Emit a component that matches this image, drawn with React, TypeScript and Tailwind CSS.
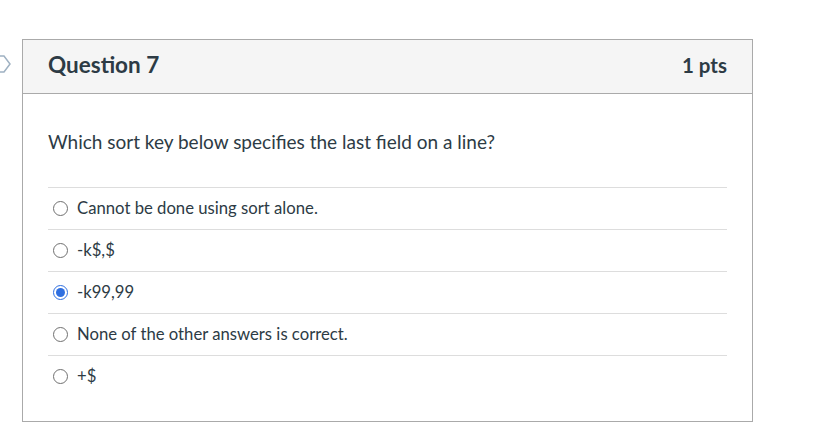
import React from "react"

const answers = [
  { id: "a1", label: "Cannot be done using sort alone.", checked: false },
  { id: "a2", label: "-k$,$", checked: false },
  { id: "a3", label: "-k99,99", checked: true },
  { id: "a4", label: "None of the other answers is correct.", checked: false },
  { id: "a5", label: "+$", checked: false },
]

function Radio({ checked }: { checked: boolean }) {
  if (checked) {
    return (
      <span className="flex h-[15px] w-[15px] items-center justify-center rounded-full border border-[#2f6fe0] bg-white">
        <span className="h-[9px] w-[9px] rounded-full bg-[#2f6fe0]" />
      </span>
    )
  }
  return <span className="block h-[15px] w-[15px] rounded-full border border-[#707070] bg-white" />
}

export default function App() {
  return (
    <div
      className="relative min-h-[447px] w-[820px] bg-white pl-[22px] pt-[39px] text-[#2d3b45]"
      style={{ fontFamily: "Lato, 'Noto Sans', sans-serif" }}
    >
      {/* question marker, partly off-screen */}
      <svg className="absolute left-[-8px] top-[54px]" width="20" height="20" viewBox="0 0 20 20">
        <path d="M1 2 H12 L18 10 L12 18 H1" fill="none" stroke="#9fb1c2" strokeWidth="1.5" />
      </svg>

      <div className="w-[731px] border border-[#aaaaaa]">
        <div className="flex h-[54px] items-center justify-between border-b border-[#aaaaaa] bg-[#f5f5f5] px-[25px] pb-[3px]">
          <h2 className="text-[22.5px] font-bold">Question 7</h2>
          <span className="text-[20.5px] font-bold">1 pts</span>
        </div>

        <div className="px-[25px] pb-[24px] pt-[36px]">
          <p className="text-[19px] leading-[24px]">Which sort key below specifies the last field on a line?</p>

          <div className="mt-[33px]">
            {answers.map((a) => (
              <label key={a.id} className="flex h-[42px] items-center gap-[9px] border-t border-[#dddddd] pl-[5px] text-[16.7px]">
                <Radio checked={a.checked} />
                <span>{a.label}</span>
              </label>
            ))}
          </div>
        </div>
      </div>
    </div>
  )
}
